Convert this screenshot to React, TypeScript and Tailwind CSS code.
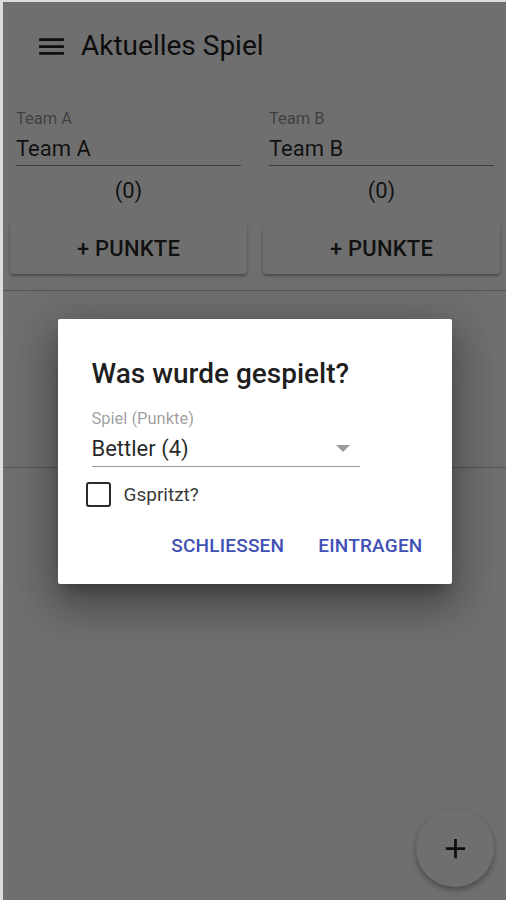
import React from 'react';

const MenuIcon = () => (
  <svg width="33" height="33" viewBox="0 0 24 24" className="shrink-0">
    <path d="M3 18h18v-2H3v2zm0-5h18v-2H3v2zm0-7v2h18V6H3z" fill="#212121" />
  </svg>
);

const TeamColumn: React.FC<{ name: string; score: number }> = ({ name, score }) => (
  <div className="flex flex-col">
    <div className="px-[6px]">
      <div className="mt-[19px] text-[16.5px] leading-[20px] text-black/45">{name}</div>
      <div className="mt-[6px] pb-[2px] text-[22px] leading-[28px] text-black/85 border-b border-black/45">
        {name}
      </div>
    </div>
    <div className="mt-[11px] text-center text-[22px] leading-[28px] text-black/85">({score})</div>
    <button className="mt-[17px] h-[52px] rounded-[4px] bg-white shadow-[0_2px_3px_rgba(0,0,0,0.35)] text-[22px] font-medium text-black/85 tracking-[0.2px]">
      + PUNKTE
    </button>
  </div>
);

export default function App() {
  return (
    <div
      className="w-[506px] h-[900px] border-l-[3px] border-t-[2px] border-[#dcdcdc] bg-white overflow-hidden"
      style={{ fontFamily: 'Roboto, "Noto Sans", sans-serif' }}
    >
      <div className="relative w-full h-full">
        {/* Page */}
        <header className="h-[88px] flex items-center pl-[32px] gap-[13px]">
          <MenuIcon />
          <h1 className="text-[28px] text-black/90 leading-none">Aktuelles Spiel</h1>
        </header>

        <div className="grid grid-cols-2 gap-4 px-[7px] pr-[6px]">
          <TeamColumn name="Team A" score={0} />
          <TeamColumn name="Team B" score={0} />
        </div>

        <section className="mt-[16px] h-[178px] border-y border-black/25" />

        <button className="absolute right-[12px] bottom-[13px] w-[78px] h-[78px] rounded-full bg-white shadow-[0_3px_6px_rgba(0,0,0,0.35)] flex items-center justify-center">
          <svg width="33" height="33" viewBox="0 0 24 24">
            <path d="M19 13h-6v6h-2v-6H5v-2h6V5h2v6h6v2z" fill="#212121" />
          </svg>
        </button>

        {/* Dialog overlay */}
        <div className="absolute inset-0 bg-black/[0.565] flex items-center justify-center">
          <div className="w-[394px] h-[265px] bg-white rounded-[2px] shadow-[0_11px_15px_-7px_rgba(0,0,0,0.3),0_24px_38px_3px_rgba(0,0,0,0.2),0_9px_46px_8px_rgba(0,0,0,0.18)] pl-[34px] pt-[39px] flex flex-col">
            <h2 className="text-[28px] leading-[32px] font-medium text-black/90">Was wurde gespielt?</h2>

            <div className="mt-[19px] text-[16.5px] leading-[20px] text-black/40">Spiel (Punkte)</div>
            <div className="mt-[6px] w-[268px] pb-[3px] flex items-center justify-between border-b border-black/40">
              <span className="text-[22px] leading-[28px] text-black/85">Bettler (4)</span>
              <svg width="14" height="7" viewBox="0 0 14 7" className="mr-[10px]">
                <path d="M0 0h14L7 7z" fill="#9a9a9a" />
              </svg>
            </div>

            <label className="mt-[14px] ml-[-6px] flex items-center gap-[13px]">
              <span className="w-[25px] h-[25px] rounded-[3px] border-[2.5px] border-[#2a2a2a]" />
              <span className="text-[19px] text-black/80">Gspritzt?</span>
            </label>

            <div className="mt-[25px] pr-[29px] flex justify-end gap-[34px] text-[19px] leading-[24px] font-medium tracking-[0.2px] text-[#3f51b5]">
              <span>SCHLIESSEN</span>
              <span>EINTRAGEN</span>
            </div>
          </div>
        </div>
      </div>
    </div>
  );
}
